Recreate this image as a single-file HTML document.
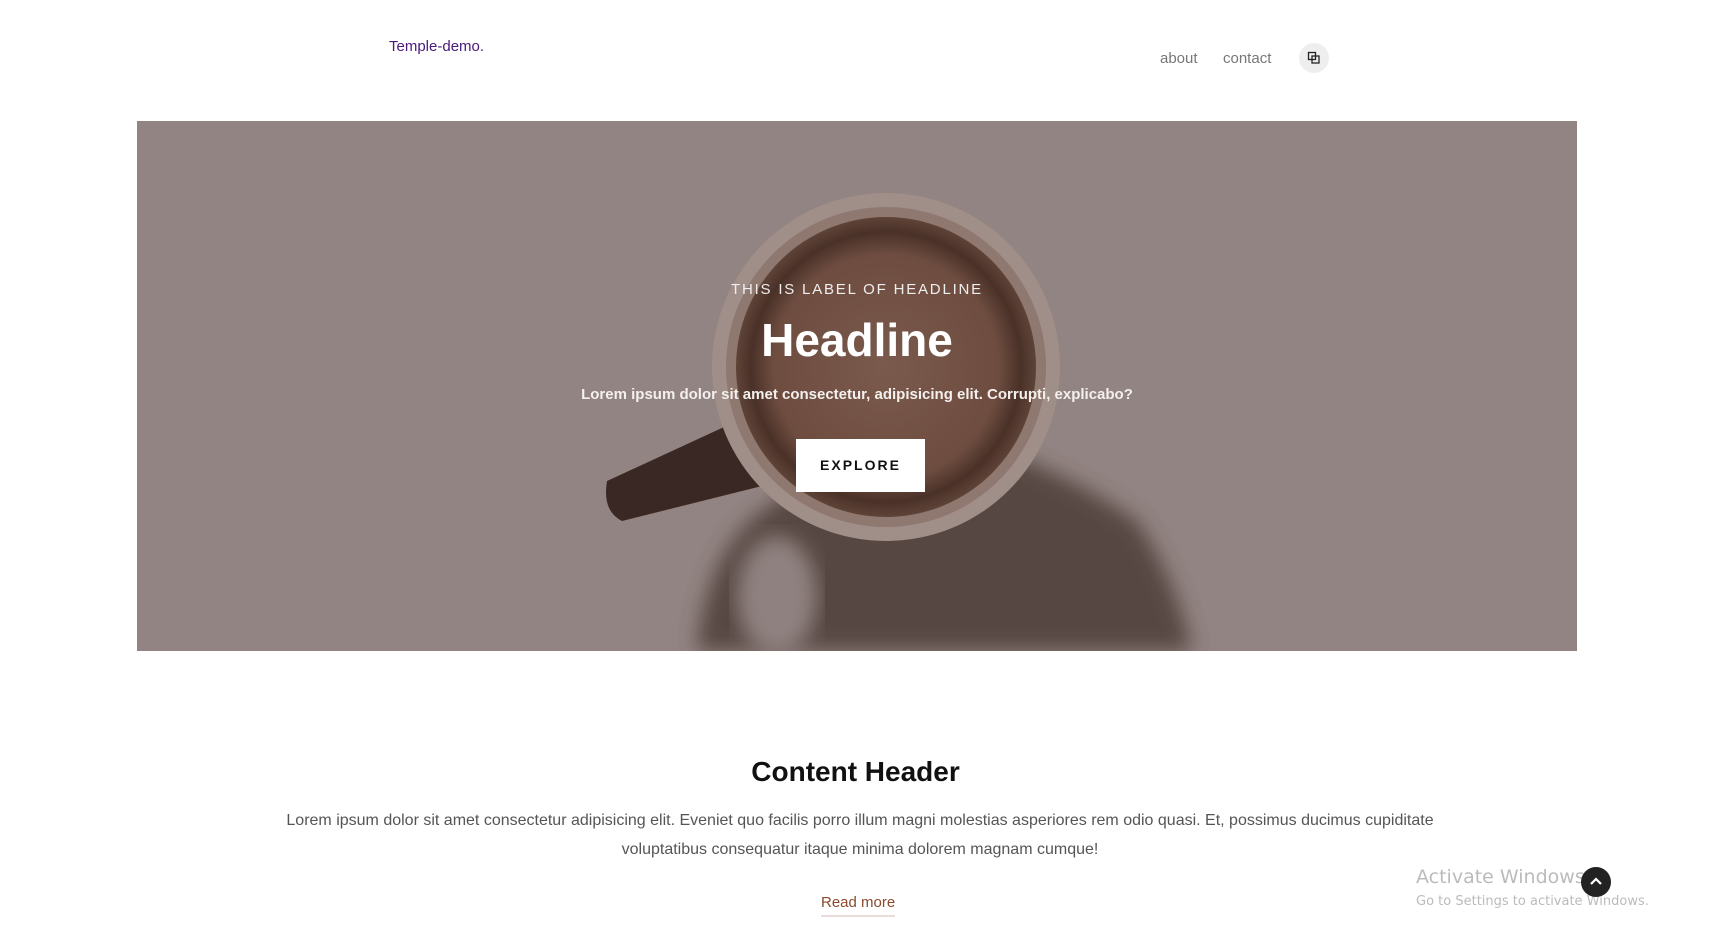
<!DOCTYPE html>
<html><head><meta charset="utf-8"><style>
*{margin:0;padding:0;box-sizing:border-box}
body{width:1711px;height:947px;background:#fff;font-family:"Liberation Sans",sans-serif;position:relative;overflow:hidden}
.logo{position:absolute;left:389px;top:38px;font-size:15px;color:#4a1a7a}
.nav{position:absolute;top:50px;font-size:15px;color:#777}
.ic{position:absolute;top:43px;width:30px;height:30px;border-radius:50%;background:#eee}
.hero{position:absolute;left:137px;top:121px;width:1440px;height:530px;background:#928482;overflow:hidden}
.t{position:absolute;left:0;width:100%;text-align:center;color:#fff}
.btn{position:absolute;left:796px;top:439px;width:129px;height:53px;background:#fff;color:#111;font-weight:bold;letter-spacing:2px;font-size:14px;text-align:center;line-height:53px}
</style></head><body>
<div class="logo">Temple-demo.</div>
<div class="nav" style="left:1160px">about</div>
<div class="nav" style="left:1223px">contact</div>
<div class="ic" style="left:1299px"><svg width="30" height="30"><rect x="9.5" y="9.5" width="7" height="7" fill="none" stroke="#222" stroke-width="1.3"/><rect x="13" y="13" width="7" height="7" fill="none" stroke="#222" stroke-width="1.3"/></svg></div>
<div class="hero">
<svg width="1440" height="530" style="position:absolute;left:0;top:0">
<defs>
<radialGradient id="cof" cx="50%" cy="50%" r="50%"><stop offset="0" stop-color="#7a5a4c"/><stop offset="0.75" stop-color="#6e4d40"/><stop offset="0.9" stop-color="#4a3128"/><stop offset="1" stop-color="#5e4337"/></radialGradient>
<filter id="b"><feGaussianBlur stdDeviation="10"/></filter>
</defs>
<path d="M760 300 Q900 330 1000 400 Q1040 460 1055 530 L560 530 Q570 420 640 380 Z" fill="#4d3c38" opacity="0.85" filter="url(#b)"/>
<ellipse cx="640" cy="475" rx="40" ry="60" fill="#8f817f" filter="url(#b)"/>
<path d="M470 360 L600 300 L625 365 L485 400 Q465 390 470 360 Z" fill="#3a2824"/>
<circle cx="749" cy="246" r="174" fill="#a08e88"/>
<circle cx="749" cy="246" r="160" fill="#8f7870"/>
<circle cx="749" cy="246" r="150" fill="url(#cof)"/>
</svg>
<div class="t" style="top:160px;font-size:15px;letter-spacing:1.8px;color:#eee">THIS IS LABEL OF HEADLINE</div>
<div class="t" style="top:192px;font-size:46px;font-weight:bold">Headline</div>
<div class="t" style="top:265px;font-size:15px;font-weight:bold;color:#f4f0ee">Lorem ipsum dolor sit amet consectetur, adipisicing elit. Corrupti, explicabo?</div>
</div>
<div class="btn">EXPLORE</div>
<div class="t" style="top:756px;font-size:28px;font-weight:bold;color:#111">Content Header</div>
<div class="t" style="top:806px;left:230px;width:1260px;font-size:16px;line-height:29px;color:#555">Lorem ipsum dolor sit amet consectetur adipisicing elit. Eveniet quo facilis porro illum magni molestias asperiores rem odio quasi. Et, possimus ducimus cupiditate<br>voluptatibus consequatur itaque minima dolorem magnam cumque!</div>
<div style="position:absolute;left:821px;top:894px;font-size:15px;color:#8a4a30;border-bottom:2px solid #e8dcda;padding-bottom:4px">Read more</div>
<div style="position:absolute;left:1416px;top:866px;font-size:19px;color:#bbb;font-family:'DejaVu Sans',sans-serif">Activate Windows</div>
<div style="position:absolute;left:1416px;top:894px;font-size:13px;color:#bbb;font-family:'DejaVu Sans',sans-serif">Go to Settings to activate Windows.</div>
<div style="position:absolute;left:1581px;top:867px;width:30px;height:30px;border-radius:50%;background:#222"><svg width="30" height="30"><path d="M10 17 L15 12 L20 17" fill="none" stroke="#fff" stroke-width="2.2"/></svg></div>
</body></html>
